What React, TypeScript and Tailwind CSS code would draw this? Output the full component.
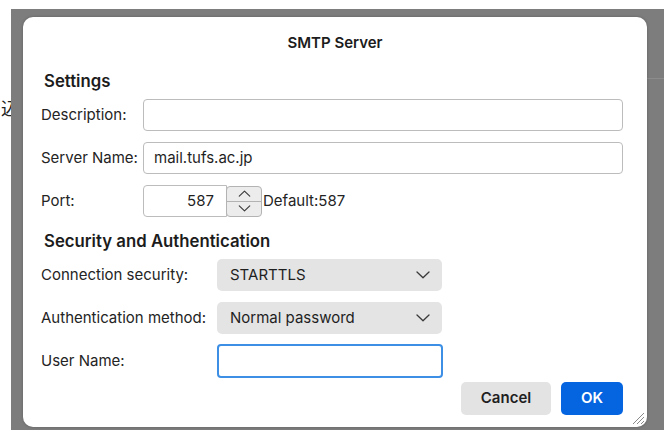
import type { ReactNode } from 'react';

const Chevron = ({ up = false, className = '' }: { up?: boolean; className?: string }) => (
  <svg width="14" height="8" viewBox="0 0 14 8" className={className} fill="none">
    <path
      d={up ? 'M1 7L7 1.2L13 7' : 'M1 1L7 6.8L13 1'}
      stroke="#3a3a3a"
      strokeWidth="1.3"
      strokeLinecap="round"
      strokeLinejoin="round"
    />
  </svg>
);

const Field = ({ label, labelWidth, children }: { label: string; labelWidth: string; children: ReactNode }) => (
  <div className="flex items-center">
    <span className={`${labelWidth} shrink-0 text-[15px] text-[#242424]`}>{label}</span>
    {children}
  </div>
);

const TextBox = ({ value = '' }: { value?: string }) => (
  <div className="flex h-[32px] w-[480px] items-center rounded-[4px] border border-[#bcbcbc] bg-white px-[10px] text-[15px] text-[#1f1f1f]">
    {value}
  </div>
);

const Select = ({ value }: { value: string }) => (
  <div className="flex h-[32px] w-[225px] items-center justify-between rounded-[5px] bg-[#e4e4e4] pl-[13px] pr-[12px] text-[15px] text-[#1f1f1f]">
    <span>{value}</span>
    <Chevron />
  </div>
);

const SectionTitle = ({ children }: { children: ReactNode }) => (
  <div className="ml-[3px] flex h-[26px] items-center text-[16.75px] font-semibold text-[#1c1c1c]">{children}</div>
);

export default function App() {
  return (
    <div className="flex h-[430px] w-[664px] overflow-hidden bg-white font-['Inter','Liberation_Sans',sans-serif]">
      {/* sliver of the window behind the sheet */}
      <div className="flex w-[11px] shrink-0 justify-end overflow-hidden pt-[98px]">
        <span className="-mr-[7px] h-[20px] font-['Noto_Sans_CJK_JP',sans-serif] text-[17px] leading-[20px] text-[#222]">
          込
        </span>
      </div>

      <div className="mt-[9px] flex flex-1 bg-[#7d7d7d] pl-[12px] pt-[8px]">
        <div className="relative flex h-[410px] w-[624px] shrink-0 flex-col rounded-[10px] bg-white px-[18px] shadow-[0_0_3px_rgba(0,0,0,0.25)]">
          <div className="flex h-[52px] items-center justify-center text-[15px] font-semibold text-[#1c1c1c]">
            SMTP Server
          </div>

          <SectionTitle>Settings</SectionTitle>

          <div className="mt-[4px] flex flex-col gap-[11px]">
            <Field label="Description:" labelWidth="w-[102px]">
              <TextBox />
            </Field>
            <Field label="Server Name:" labelWidth="w-[102px]">
              <TextBox value="mail.tufs.ac.jp" />
            </Field>
            <Field label="Port:" labelWidth="w-[102px]">
              <div className="flex h-[32px] w-[84px] items-center justify-end rounded-l-[4px] border border-[#bcbcbc] bg-white pr-[12px] text-[15px] text-[#1f1f1f]">
                587
              </div>
              <div className="-ml-px flex h-[31px] w-[36px] flex-col rounded-[4px] border border-[#b3b3b3] bg-[#ececec]">
                <div className="flex flex-1 items-center justify-center border-b border-[#b3b3b3]">
                  <Chevron up className="h-[7px] w-[13px]" />
                </div>
                <div className="flex flex-1 items-center justify-center">
                  <Chevron className="h-[7px] w-[13px]" />
                </div>
              </div>
              <span className="ml-px text-[15px] text-[#242424]">Default:587</span>
            </Field>
          </div>

          <div className="mt-[12px]">
            <SectionTitle>Security and Authentication</SectionTitle>
          </div>

          <div className="mt-[4px] flex flex-col gap-[11px]">
            <Field label="Connection security:" labelWidth="w-[176px]">
              <Select value="STARTTLS" />
            </Field>
            <Field label="Authentication method:" labelWidth="w-[176px]">
              <Select value="Normal password" />
            </Field>
          </div>

          <div className="mt-[10px]">
            <Field label="User Name:" labelWidth="w-[176px]">
              <div className="h-[34px] w-[226px] rounded-[4px] border-2 border-[#3d8fe6] bg-white" />
            </Field>
          </div>

          <div className="mt-[4px] flex justify-end gap-[10px] pr-[6px]">
            <button className="h-[33px] w-[90px] rounded-[5px] bg-[#e3e3e3] text-[15px] font-semibold text-[#1f1f1f]">
              Cancel
            </button>
            <button className="h-[33px] w-[62px] rounded-[5px] bg-[#0564e0] text-[15px] font-semibold text-white">
              OK
            </button>
          </div>

          {/* resize grip */}
          <svg className="absolute bottom-[2px] right-[2px]" width="15" height="15" viewBox="0 0 15 15">
            <path d="M14 3L3 14M14 7L7 14M14 11L11 14" stroke="#8a8a8a" strokeWidth="1" />
          </svg>
        </div>

        {/* edge of the window behind, on the right */}
        <div className="flex-1 pt-[61px]">
          <div className="h-px bg-[#8c8c8c]" />
        </div>
      </div>
    </div>
  );
}
